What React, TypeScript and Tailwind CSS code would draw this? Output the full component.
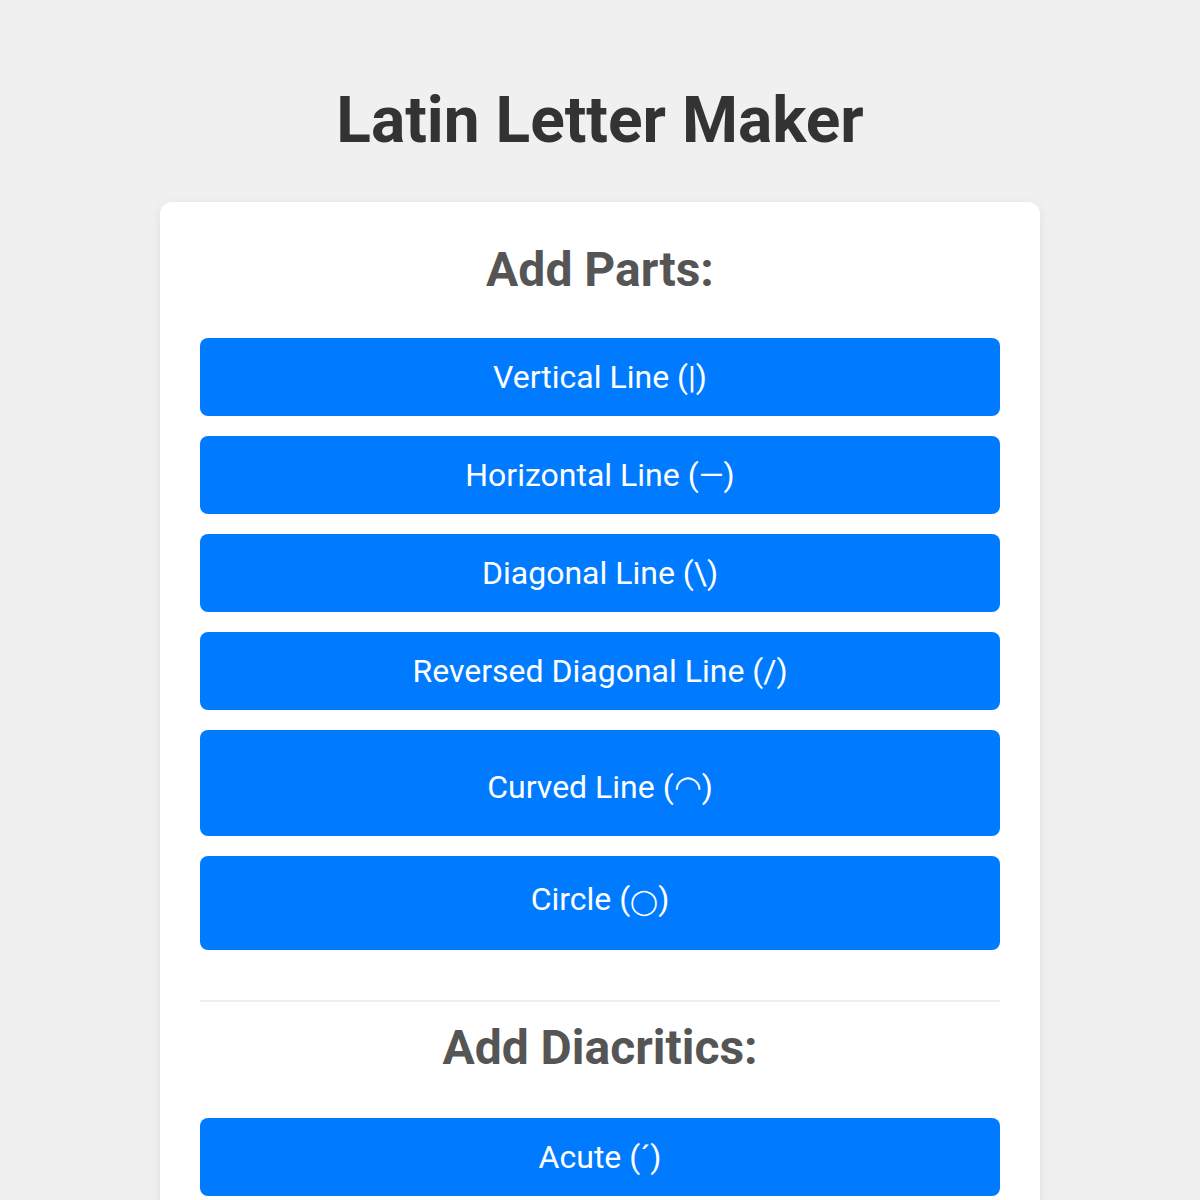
import { ReactNode } from 'react'

const parts: { label: ReactNode; key: string; pad: string }[] = [
  { key: 'vertical', label: 'Vertical Line (|)', pad: 'py-5' },
  { key: 'horizontal', label: 'Horizontal Line (—)', pad: 'py-5' },
  { key: 'diagonal', label: 'Diagonal Line (\\)', pad: 'py-5' },
  { key: 'reversed', label: 'Reversed Diagonal Line (/)', pad: 'py-5' },
  { key: 'curved', label: 'Curved Line (◠)', pad: 'pt-[38px] pb-[30px]' },
  {
    key: 'circle',
    label: (
      <>
        Circle (<span className="text-[25px]">◯</span>)
      </>
    ),
    pad: 'pt-6 pb-[32px]',
  },
]

const diacritics = [
  { key: 'acute', label: 'Acute (´)', pad: 'py-5' },
  { key: 'grave', label: 'Grave (`)', pad: 'py-5' },
  { key: 'circumflex', label: 'Circumflex (ˆ)', pad: 'py-5' },
]

function PartButton({ label, pad }: { label: ReactNode; pad: string }) {
  return (
    <button
      className={`w-full rounded-lg bg-[#007bff] px-5 text-[32px] leading-[normal] text-white hover:bg-[#0069d9] ${pad}`}
    >
      {label}
    </button>
  )
}

export default function App() {
  return (
    <div className="min-h-screen bg-[#f0f0f0] px-5 pt-[83px] pb-10 font-['Roboto',sans-serif]">
      <h1 className="text-center text-[64px] font-bold leading-[75px] text-[#333]">Latin Letter Maker</h1>

      <div className="mx-auto mt-[44px] w-[880px] rounded-xl bg-white p-10 shadow-[0_2px_10px_rgba(0,0,0,0.08)]">
        {/* parts */}
        <section className="pb-[50px]">
          <h2 className="mb-10 text-center text-[48px] font-bold leading-[56px] text-[#555]">Add Parts:</h2>
          <div className="flex flex-col gap-5">
            {parts.map(p => (
              <PartButton key={p.key} label={p.label} pad={p.pad} />
            ))}
          </div>
        </section>

        <section className="border-t-2 border-[#eeeeee] pt-[18px]">
          <h2 className="mb-[42px] text-center text-[48px] font-bold leading-[56px] text-[#555]">Add Diacritics:</h2>
          <div className="flex flex-col gap-5">
            {diacritics.map(d => (
              <PartButton key={d.key} label={d.label} pad={d.pad} />
            ))}
          </div>
        </section>
      </div>
    </div>
  )
}
